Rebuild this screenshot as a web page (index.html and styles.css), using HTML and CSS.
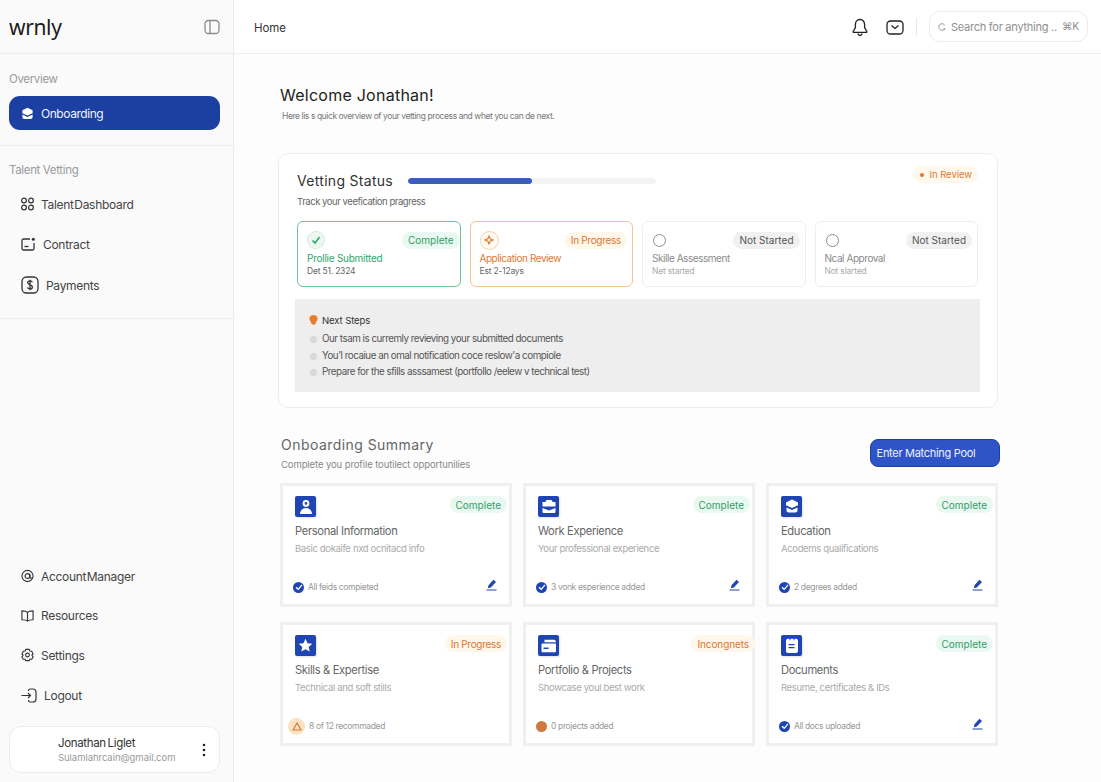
FILE: index.html
```html
<!DOCTYPE html>
<html lang="en">
<head>
<meta charset="utf-8">
<title>wrnly - Home</title>
<link rel="stylesheet" href="styles.css">
</head>
<body>
<div class="app">
  <aside class="sidebar">
    <div class="brand">
      <span class="logo">wrnly</span>
      <svg class="panel-ico" width="16" height="16" viewBox="0 0 16 16" fill="none" stroke="#8a8a8a" stroke-width="1.3"><rect x="1" y="1.5" width="14" height="13" rx="3.5"/><path d="M6 1.5v13"/></svg>
    </div>
    <section class="side-sec first">
      <div class="side-label">Overview</div>
      <a class="pill">
        <svg width="13" height="13" viewBox="0 0 14 14" fill="#fff"><path d="M7 .8l5.500 2.700v3.200L7 9.200 1.500 6.700V3.500z"/><path d="M1.500 8.200L7 10.700l5.500-2.500v2.600c0 1.100-.8 2-2 2h-7c-1.200 0-2-.9-2-2z"/></svg>
        <span>Onboarding</span>
      </a>
    </section>
    <section class="side-sec second">
      <div class="side-label">Talent Vetting</div>
      <nav class="side-nav">
        <a class="item"><svg width="13" height="14" viewBox="0 0 13 14" fill="none" stroke="#333" stroke-width="1.200"><circle cx="3" cy="3.500" r="2.400"/><circle cx="10" cy="3.500" r="2.400"/><circle cx="3" cy="10.500" r="2.400"/><circle cx="10" cy="10.500" r="2.400"/></svg><span>Talent Dashboard</span></a>
        <a class="item"><svg width="15" height="14" viewBox="0 0 15 14" fill="none" stroke="#333" stroke-width="1.300"><path d="M9 2H2.500C1.700 2 1 2.700 1 3.500v8c0 .8.700 1.500 1.500 1.500h9c.8 0 1.500-.7 1.500-1.500V6"/><path d="M3.500 9.500h4"/><circle cx="12.300" cy="2.300" r="1.500" fill="#333" stroke="none"/></svg><span>Contract</span></a>
        <a class="item"><svg width="18" height="18" viewBox="0 0 18 18" fill="none" stroke="#333" stroke-width="1.300"><rect x="1" y="1" width="16" height="16" rx="4.500"/><path d="M11.300 6.300C11 5.300 10 4.900 9 4.900c-1.200 0-2.300.6-2.300 1.900 0 2.600 4.700 1.400 4.700 4.100 0 1.300-1.200 2-2.400 2-1.100 0-2.100-.5-2.400-1.600M9 3.800v10.400"/></svg><span>Payments</span></a>
      </nav>
    </section>
    <div class="side-bottom">
      <nav class="side-nav">
        <a class="item"><svg width="13" height="14" viewBox="0 0 14 14" fill="none" stroke="#333" stroke-width="1.200"><circle cx="7" cy="7" r="6"/><circle cx="7" cy="7" r="2.600"/><path d="M9.600 5v3c0 1.500 2 1.800 3 .7"/></svg><span>Account Manager</span></a>
        <a class="item"><svg width="13" height="14" viewBox="0 0 14 14" fill="none" stroke="#333" stroke-width="1.200"><path d="M7 3C6 2 4.500 1.500 1 1.500v9.500c3.500 0 5 .5 6 1.500 1-1 2.500-1.500 6-1.500V1.500C9.500 1.500 8 2 7 3zM7 3v9.500"/></svg><span>Resources</span></a>
        <a class="item"><svg width="13" height="14" viewBox="0 0 14 14" fill="none" stroke="#333" stroke-width="1.200"><path d="M5.200 1h3.600l.8 1.800 2 .2 1.400 3-1.300 1.100 1.300 1.900-1.400 2.500-2 .1L8.800 13H5.200l-.8-1.400-2-.1L1 9l1.300-1.900L1 6l1.400-3 2-.2z"/><circle cx="7" cy="7" r="2"/></svg><span>Settings</span></a>
        <a class="item"><svg width="16" height="15" viewBox="0 0 16 15" fill="none" stroke="#333" stroke-width="1.200"><path d="M7.500 3V2.800C7.500 1.800 8.300 1 9.300 1h2.500c1.800 0 3.200 1.500 3.200 3.300v6.400c0 1.800-1.400 3.300-3.200 3.300H9.300c-1 0-1.800-.8-1.800-1.800V12"/><path d="M.5 7.500h9M7 5l2.500 2.500L7 10"/></svg><span>Logout</span></a>
      </nav>
      <div class="user">
        <div class="user-text">
          <div class="user-name">Jonathan Liglet</div>
          <div class="user-mail">Sulamlahrcain@gmail.com</div>
        </div>
        <svg width="4" height="14" viewBox="0 0 4 14" fill="#222"><circle cx="2" cy="2" r="1.300"/><circle cx="2" cy="7" r="1.300"/><circle cx="2" cy="12" r="1.300"/></svg>
      </div>
    </div>
  </aside>

  <div class="main">
    <header class="topbar">
      <div class="crumb">Home</div>
      <div class="top-tools">
        <svg class="bell-ico" width="16" height="19" viewBox="0 0 16 19" fill="none" stroke="#222" stroke-width="1.300"><path d="M8 1.500c-2.800 0-4.600 2.200-4.600 5v3.200L1.200 13.500c-.2.400 0 .8.500.8h12.600c.5 0 .7-.4.500-.8l-2.200-3.800V6.500c0-2.800-1.800-5-4.600-5z"/><path d="M5.800 15.500c.4 1.300 1.200 2 2.200 2s1.800-.7 2.200-2"/></svg>
        <svg class="mail-ico" width="18" height="15" viewBox="0 0 18 15" fill="none" stroke="#222" stroke-width="1.300"><rect x="1" y="1" width="16" height="13" rx="3.500"/><path d="M5.500 5.500L9 8.500l3.500-3"/></svg>
        <span class="top-div"></span>
        <div class="search">
          <svg width="12" height="12" viewBox="0 0 11 11" fill="none" stroke="#888" stroke-width="1.200"><path d="M9.500 3.200A4.500 4.500 0 1 0 9.800 7"/><path d="M7.800 7.800L10 10"/></svg>
          <span class="search-text">Search for anything ..</span>
          <span class="search-key">⌘K</span>
        </div>
      </div>
    </header>

    <main class="content">
      <h1 class="welcome">Welcome Jonathan!</h1>
      <p class="welcome-sub">Here lis s quick overview of your vetting process and whet you can de next.</p>

      <section class="status-card">
        <div class="status-head">
          <h2 class="status-title">Vetting Status</h2>
          <div class="bar"><div class="bar-fill"></div></div>
          <span class="review"><i class="dot"></i>In Review</span>
        </div>
        <p class="status-sub">Track your veefication pragress</p>
        <div class="steps">
          <article class="step step-done">
            <div class="step-top">
              <span class="step-ico ico-green"><svg width="10" height="10" viewBox="0 0 10 10" fill="none" stroke="#27a567" stroke-width="1.500"><path d="M1.500 5.500L4 8l4.500-6"/></svg></span>
              <span class="badge b-green">Complete</span>
            </div>
            <div class="step-name n-green">Prollie Submitted</div>
            <div class="step-date">Det 51. 2324</div>
          </article>
          <article class="step step-active">
            <div class="step-top">
              <span class="step-ico ico-orange"><svg width="10" height="10" viewBox="0 0 10 10" fill="none" stroke="#e07a2e" stroke-width="1.100"><path d="M5 1l1.200 2.800L9 5 6.200 6.200 5 9 3.800 6.200 1 5l2.800-1.200z"/></svg></span>
              <span class="badge b-orange">In Progress</span>
            </div>
            <div class="step-name n-orange">Application Review</div>
            <div class="step-date">Est 2-12ays</div>
          </article>
          <article class="step">
            <div class="step-top">
              <span class="step-ico ico-grey"></span>
              <span class="badge b-grey">Not Started</span>
            </div>
            <div class="step-name">Skille Assessment</div>
            <div class="step-date muted">Net started</div>
          </article>
          <article class="step">
            <div class="step-top">
              <span class="step-ico ico-grey"></span>
              <span class="badge b-grey">Not Started</span>
            </div>
            <div class="step-name">Ncal Approval</div>
            <div class="step-date muted">Not slarted</div>
          </article>
        </div>
        <div class="next">
          <div class="next-head">
            <svg width="9" height="10" viewBox="0 0 9 10" fill="#e67e2e"><path d="M4.500 0C2 0 .4 1.700.4 3.800c0 1.400.8 2.400 1.700 3.100V8.600L4.500 10l2.400-1.400V6.900c.9-.7 1.700-1.700 1.700-3.100C8.600 1.700 7 0 4.500 0z"/></svg>
            <span>Next Steps</span>
          </div>
          <ul class="next-list">
            <li>Our tsam is curremly revieving your submitted documents</li>
            <li>You'l rocaiue an omal notification coce reslow'a compiole</li>
            <li>Prepare for the sfills asssamest (portfollo /eelew v technical test)</li>
          </ul>
        </div>
      </section>

      <section class="summary">
        <div class="summary-head">
          <div>
            <h2 class="summary-title">Onboarding Summary</h2>
            <p class="summary-sub">Complete you profile toutilect opportunilies</p>
          </div>
          <button class="enter">Enter Matching Pool</button>
        </div>
        <div class="cards">
          <article class="card">
            <div class="card-top">
              <span class="tile"><svg width="16" height="16" viewBox="0 0 16 16" fill="#fff"><path d="M8 1a3.400 3.400 0 1 0 0 6.800A3.400 3.400 0 0 0 8 1zm0 2a1.400 1.400 0 1 1 0 2.800A1.400 1.400 0 0 1 8 3z"/><path d="M2 15c0-3.300 2.700-6 6-6s6 2.700 6 6z"/></svg></span>
              <span class="badge b-green">Complete</span>
            </div>
            <h3 class="card-title">Personal Information</h3>
            <p class="card-sub">Basic dokaife nxd ocnitacd info</p>
            <div class="card-foot">
              <span class="chk"><svg width="8" height="8" viewBox="0 0 8 8" fill="none" stroke="#fff" stroke-width="1.300"><path d="M1 4.200L3.200 6.300 7 1.800"/></svg></span>
              <span class="foot-text">All feids compieted</span>
              <svg class="pen" width="11" height="12" viewBox="0 0 11 12" fill="#1f45b5"><path d="M7.500 .8l2.500 2.300-5.200 5.400-3 .7.700-3zM.5 10.500h10v1H.5z"/></svg>
            </div>
          </article>
          <article class="card">
            <div class="card-top">
              <span class="tile"><svg width="16" height="15" viewBox="0 0 16 15" fill="#fff"><path d="M5.500 1h5l1.200 2h2.800v4.500h-13V3h2.800z"/><path d="M1.500 9l6.500 2.500L14.500 9v3.500c0 1-.8 1.500-1.500 1.500H3c-.7 0-1.500-.5-1.500-1.500z"/></svg></span>
              <span class="badge b-green">Complete</span>
            </div>
            <h3 class="card-title">Work Experience</h3>
            <p class="card-sub">Your professional experience</p>
            <div class="card-foot">
              <span class="chk"><svg width="8" height="8" viewBox="0 0 8 8" fill="none" stroke="#fff" stroke-width="1.300"><path d="M1 4.200L3.200 6.300 7 1.800"/></svg></span>
              <span class="foot-text">3 vonk esperience added</span>
              <svg class="pen" width="11" height="12" viewBox="0 0 11 12" fill="#1f45b5"><path d="M7.500 .8l2.500 2.300-5.200 5.400-3 .7.700-3zM.5 10.500h10v1H.5z"/></svg>
            </div>
          </article>
          <article class="card">
            <div class="card-top">
              <span class="tile"><svg width="16" height="15" viewBox="0 0 16 15" fill="#fff"><path d="M8 .5l6 3v2.800L8 9 2 6.300V3.500z"/><path d="M2.500 8.500L8 11l5.500-2.500v3c0 1.200-1 2-2 2h-7c-1 0-2-.8-2-2z"/></svg></span>
              <span class="badge b-green">Complete</span>
            </div>
            <h3 class="card-title">Education</h3>
            <p class="card-sub">Acodems qualifications</p>
            <div class="card-foot">
              <span class="chk"><svg width="8" height="8" viewBox="0 0 8 8" fill="none" stroke="#fff" stroke-width="1.300"><path d="M1 4.200L3.200 6.300 7 1.800"/></svg></span>
              <span class="foot-text">2 degrees added</span>
              <svg class="pen" width="11" height="12" viewBox="0 0 11 12" fill="#1f45b5"><path d="M7.500 .8l2.500 2.300-5.200 5.400-3 .7.700-3zM.5 10.500h10v1H.5z"/></svg>
            </div>
          </article>
          <article class="card">
            <div class="card-top">
              <span class="tile"><svg width="15" height="15" viewBox="0 0 15 15" fill="#fff"><path d="M7.500 .8l2 4.400 4.800.5-3.600 3.200 1 4.700-4.200-2.400-4.200 2.400 1-4.700L.7 5.700l4.800-.5z"/></svg></span>
              <span class="badge b-orange">In Progress</span>
            </div>
            <h3 class="card-title">Skills &amp; Expertise</h3>
            <p class="card-sub">Technical and soft stills</p>
            <div class="card-foot">
              <span class="warn"><svg width="10" height="9" viewBox="0 0 10 9" fill="none" stroke="#d9742c" stroke-width="1.100"><path d="M5 1l4 7H1z"/></svg></span>
              <span class="foot-text">8 of 12 recommaded</span>
            </div>
          </article>
          <article class="card">
            <div class="card-top">
              <span class="tile"><svg width="16" height="14" viewBox="0 0 16 14" fill="#fff"><path d="M3.500 .8h9.500c1 0 2 1 2 2.500H3.500z"/><path d="M1.500 4.500h12.500c.5 0 1 .4 1 1v6.700c0 .5-.5 1-1 1H1.500c-.5 0-1-.5-1-1V5.500c0-.6.500-1 1-1zm1 4v1.500h5V8.500z" fill-rule="evenodd"/></svg></span>
              <span class="badge b-orange b-over">Incongnets</span>
            </div>
            <h3 class="card-title">Portfolio &amp; Projects</h3>
            <p class="card-sub">Showcase youl best work</p>
            <div class="card-foot">
              <span class="odot"></span>
              <span class="foot-text">0 projects added</span>
            </div>
          </article>
          <article class="card">
            <div class="card-top">
              <span class="tile"><svg width="14" height="16" viewBox="0 0 14 16" fill="#fff"><path d="M3 .8h1.500v1.400h1V.8h3v1.400h1V.8H11c1.200 0 2 .9 2 2V13c0 1.200-.8 2-2 2H3c-1.200 0-2-.8-2-2V2.800C1 1.700 1.800.8 3 .8zM3.500 6v1.200h6V6zm0 3v1.200h6V9z" fill-rule="evenodd"/></svg></span>
              <span class="badge b-green">Complete</span>
            </div>
            <h3 class="card-title">Documents</h3>
            <p class="card-sub">Resume, certificates &amp; IDs</p>
            <div class="card-foot">
              <span class="chk"><svg width="8" height="8" viewBox="0 0 8 8" fill="none" stroke="#fff" stroke-width="1.300"><path d="M1 4.200L3.200 6.300 7 1.800"/></svg></span>
              <span class="foot-text">All docs uploaded</span>
              <svg class="pen" width="11" height="12" viewBox="0 0 11 12" fill="#1f45b5"><path d="M7.500 .8l2.500 2.300-5.200 5.400-3 .7.700-3zM.5 10.500h10v1H.5z"/></svg>
            </div>
          </article>
        </div>
      </section>
    </main>
  </div>
</div>
</body>
</html>
```

FILE: styles.css
```css
* { box-sizing: border-box; }
html, body { margin: 0; height: 100%; overflow: hidden; }
body { font-family: Inter, "Liberation Sans", sans-serif; color: #333; background: #fff; font-size: 12px; }
h1, h2, h3, p, ul { margin: 0; padding: 0; }
.app { display: flex; height: 782px; }

/* sidebar */
.sidebar { width: 234px; flex: none; display: flex; flex-direction: column; background: #fafafa; border-right: 1px solid #ececec; }
.brand { height: 54px; flex: none; padding: 0 13px 0 9px; display: flex; align-items: center; justify-content: space-between; border-bottom: 1px solid #ececec; }
.logo { font-family: "Noto Sans", sans-serif; font-size: 21px; line-height: 24px; font-weight: 400; letter-spacing: -.35px; color: #1b1b1b; }
.side-sec { padding: 17px 13px 15px 9px; border-bottom: 1px solid #ececec; }
.side-sec.second { padding-top: 16px; padding-bottom: 13px; }
.side-label { font-size: 11.500px; line-height: 16px; color: #9a9a9a; letter-spacing: -.35px; }
.pill { margin-top: 9px; height: 34px; display: flex; align-items: center; gap: 7px; padding-left: 12px; background: #1c3fa2; border-radius: 11px; color: #f1f3fb; font-size: 12px; letter-spacing: -.45px; }
.side-nav { display: flex; flex-direction: column; }
.second .side-nav { margin-top: 6px; }
.item { height: 40px; display: flex; align-items: center; gap: 7px; padding-left: 12px; font-size: 12px; letter-spacing: -.3px; word-spacing: -2.500px; color: #444; }
.second .item:last-child { margin-top: 1px; }
.side-bottom { margin-top: auto; padding: 0 13px 9px 9px; }
.side-bottom .item { height: 39.700px; }
.user { margin-top: 11px; height: 47px; display: flex; align-items: center; justify-content: space-between; padding: 0 13px 0 48px; background: #fff; border: 1px solid #ececec; border-radius: 12px; }
.user-name { font-size: 11.500px; line-height: 15px; letter-spacing: -.35px; word-spacing: -1px; color: #333; }
.user-mail { font-size: 9.500px; line-height: 13px; letter-spacing: -.05px; color: #9a9a9a; }

/* top bar */
.main { flex: 1; min-width: 0; display: flex; flex-direction: column; }
.topbar { height: 54px; flex: none; display: flex; align-items: center; justify-content: space-between; padding: 0 13px 0 20px; border-bottom: 1px solid #eeeeee; }
.crumb { margin-top: 2px; font-size: 11.500px; color: #333; letter-spacing: -.1px; }
.top-tools { display: flex; align-items: center; }
.bell-ico { margin-top: 2px; }
.mail-ico { margin: 1px 0 0 18px; }
.top-div { width: 1px; height: 18px; background: #e8e8e8; margin: 0 12px; }
.search { width: 159px; height: 31px; display: flex; align-items: center; gap: 5px; padding: 0 8px 0 8px; background: #fff; border: 1px solid #ececec; border-radius: 11px; color: #8f8f8f; font-size: 11px; letter-spacing: -.25px; white-space: nowrap; }
.search-text { flex: 1; }
.search-key { font-size: 10.500px; }

/* content */
.content { flex: 1; padding: 30px 0 0 44px; background: #fdfdfd; }
.welcome { padding-left: 2px; font-size: 16px; line-height: 22px; font-weight: 400; color: #222; letter-spacing: .25px; }
.welcome-sub { margin-top: 4px; padding-left: 4px; font-size: 8.500px; line-height: 12px; color: #777; letter-spacing: -.42px; }
.status-card { margin-top: 31px; width: 720px; height: 255px; padding: 12px 19px 0 18px; background: #fff; border: 1px solid #eeeeee; border-radius: 10px; }
.status-head { display: flex; align-items: flex-start; height: 24px; }
.status-title { margin-top: 6px; font-size: 14px; line-height: 18px; font-weight: 400; color: #333; letter-spacing: .3px; }
.bar { margin: 12px 0 0 15px; width: 248px; height: 6px; background: #f1f3f4; border-radius: 3px; overflow: hidden; }
.bar-fill { width: 50%; height: 100%; background: #3b5cc0; border-radius: 3px; }
.review { margin-left: auto; height: 17px; padding: 0 6px 0 7px; display: flex; align-items: center; gap: 6px; background: #fff8ec; border-radius: 9px; font-size: 9.500px; color: #dc7a35; letter-spacing: -.05px; }
.dot { width: 4px; height: 4px; border-radius: 50%; background: #dc7a35; }
.status-sub { margin-top: 6px; font-size: 9.500px; line-height: 12px; color: #666; letter-spacing: -.45px; }
.steps { margin-top: 13px; display: grid; grid-template-columns: repeat(4, 1fr); gap: 9px; }
.step { height: 66px; padding: 9px 5px 0 9px; border: 1px solid #eeeeee; border-radius: 6px; background: #fff; color: #8a8a8a; }
.step-done { border-color: #6cc596; }
.step-active { border-color: #f5c78d; }
.step-top { display: flex; align-items: center; justify-content: space-between; height: 18px; }
.step-ico { width: 13px; height: 13px; border-radius: 50%; display: flex; align-items: center; justify-content: center; }
.ico-green { width: 18px; height: 18px; background: #eef6f0; border: 1px dotted #b8dcc5; }
.ico-orange { width: 19px; height: 19px; border: 1px solid #f3d3ab; background: #fffaf3; }
.ico-grey { border: 1.300px solid #8d8d8d; margin-left: 1px; }
.step-done .badge { margin-right: -5px; }
.badge { height: 17px; padding: 0 6px; display: inline-flex; align-items: center; border-radius: 9px; font-size: 10px; line-height: 1; white-space: nowrap; }
.b-green { background: #e9f8f0; color: #2f9e68; }
.b-orange { background: #fff7ea; color: #dd7430; letter-spacing: -.3px; }
.b-over { margin-right: -5px; letter-spacing: -.1px; }
.b-grey { background: #f1f1f1; color: #555; }
.step-name { margin-top: 3px; font-size: 10px; line-height: 13px; letter-spacing: -.45px; color: #8a8a8a; }
.n-green { color: #2fa56c; letter-spacing: -.25px; }
.n-orange { color: #dc7a33; }
.step-date { font-size: 8.500px; line-height: 13px; color: #666; letter-spacing: -.2px; }
.step-date.muted { color: #aaa; }
.next { margin: 12px -2px 0; height: 93px; padding: 14px 14px 0; background: #eeeeee; }
.next-head { display: flex; align-items: center; gap: 4px; height: 14px; font-size: 9.500px; color: #333; letter-spacing: -.1px; }
.next-list { margin-top: 4px; list-style: none; }
.next-list li { position: relative; height: 16.500px; padding-left: 13px; font-size: 9.800px; line-height: 16px; color: #555; letter-spacing: -.48px; white-space: nowrap; }
.next-list li::before { content: ""; position: absolute; left: 1px; top: 5px; width: 7px; height: 7px; border-radius: 50%; background: #d6d8da; }

/* summary */
.summary { margin-top: 27px; padding-left: 2px; width: 722px; }
.summary-head { display: flex; justify-content: space-between; align-items: flex-start; }
.summary-title { padding-left: 1px; font-size: 14px; line-height: 20px; font-weight: 400; color: #666; letter-spacing: .45px; }
.summary-sub { margin-top: 4px; padding-left: 1px; font-size: 9.500px; line-height: 12px; color: #888; letter-spacing: -.1px; }
.enter { margin-top: 4px; width: 130px; height: 28px; padding: 0 18px 0 0; border: 1px solid #1c3fa2; border-radius: 8px; background: #2f54c8; color: #eef1fb; font-family: inherit; font-size: 11px; letter-spacing: -.3px; white-space: nowrap; }
.cards { margin-top: 12px; width: 718px; display: grid; grid-template-columns: repeat(3, 1fr); column-gap: 11px; row-gap: 15px; }
.card { height: 124px; padding: 10px 2px 11px 12px; display: flex; flex-direction: column; background: #fff; border: 3px solid #f0f0f0; }
.card-top { display: flex; align-items: flex-start; justify-content: space-between; height: 21px; }
.tile { width: 21px; height: 21px; display: flex; align-items: center; justify-content: center; background: #1f45b5; border-radius: 2px; box-shadow: 1px 1px 2px rgba(0,0,0,.12); }
.card-title { margin-top: 7px; font-size: 11.200px; line-height: 14px; font-weight: 400; color: #666; letter-spacing: -.35px; }
.card-sub { margin-top: 4px; font-size: 9.500px; line-height: 13px; color: #aaa; letter-spacing: -.35px; }
.card-foot { margin: auto 10px 0 -2px; height: 12px; display: flex; align-items: center; gap: 4px; position: relative; }
.foot-text { font-size: 8.500px; color: #999; letter-spacing: -.35px; white-space: nowrap; }
.chk { width: 11px; height: 11px; border-radius: 50%; background: #1f45b5; display: flex; align-items: center; justify-content: center; flex: none; }
.pen { margin-left: auto; margin-top: -5px; }
.warn { width: 17px; height: 17px; margin-left: -5px; border-radius: 50%; background: #fae2c4; display: flex; align-items: center; justify-content: center; flex: none; }
.odot { width: 11px; height: 11px; border-radius: 50%; background: #cf7a3e; flex: none; }
```
